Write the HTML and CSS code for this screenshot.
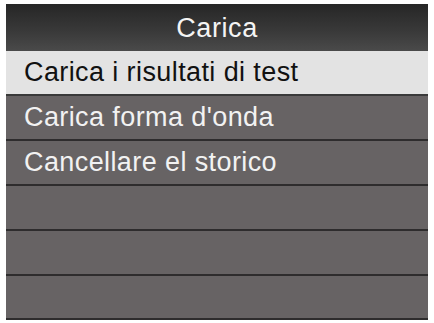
FILE: index.html
```html
<!DOCTYPE html>
<html>
<head>
<meta charset="utf-8">
<link rel="stylesheet" href="styles.css">
</head>
<body>
<div class="panel">
  <div class="header">Carica</div>
  <div class="row selected">Carica i risultati di test</div>
  <div class="row">Carica forma d'onda</div>
  <div class="row">Cancellare el storico</div>
  <div class="row"></div>
  <div class="row"></div>
  <div class="row"></div>
</div>
</body>
</html>
```
FILE: styles.css
```css
html, body {
  margin: 0;
  padding: 0;
  background: #ffffff;
}
body {
  width: 434px;
  height: 323px;
  overflow: hidden;
  font-family: "Liberation Sans", Arial, sans-serif;
}
.panel {
  margin: 4px 6px 0 6px;
  width: 422px;
  height: 316px;
  display: flex;
  flex-direction: column;
  background: #676364;
}
.header {
  height: 47px;
  flex: none;
  display: flex;
  align-items: center;
  justify-content: center;
  color: #f4f4f4;
  font-size: 27px;
  letter-spacing: 0.6px;
  background: linear-gradient(#262626, #3a3a3a 60%, #4a4a4a);
  box-sizing: border-box;
  padding-top: 1px;
}
.row {
  height: 45px;
  flex: none;
  box-sizing: border-box;
  border-bottom: 2px solid #2e2c2d;
  display: flex;
  align-items: center;
  padding-left: 18px;
  font-size: 27px;
  letter-spacing: 0.4px;
  color: #f2f2f2;
  background: #676364;
}
.row.selected {
  background: #e3e3e3;
  color: #111111;
  border-bottom-color: #3a3a3a;
}
.row:last-child {
  height: 44px;
}
```
